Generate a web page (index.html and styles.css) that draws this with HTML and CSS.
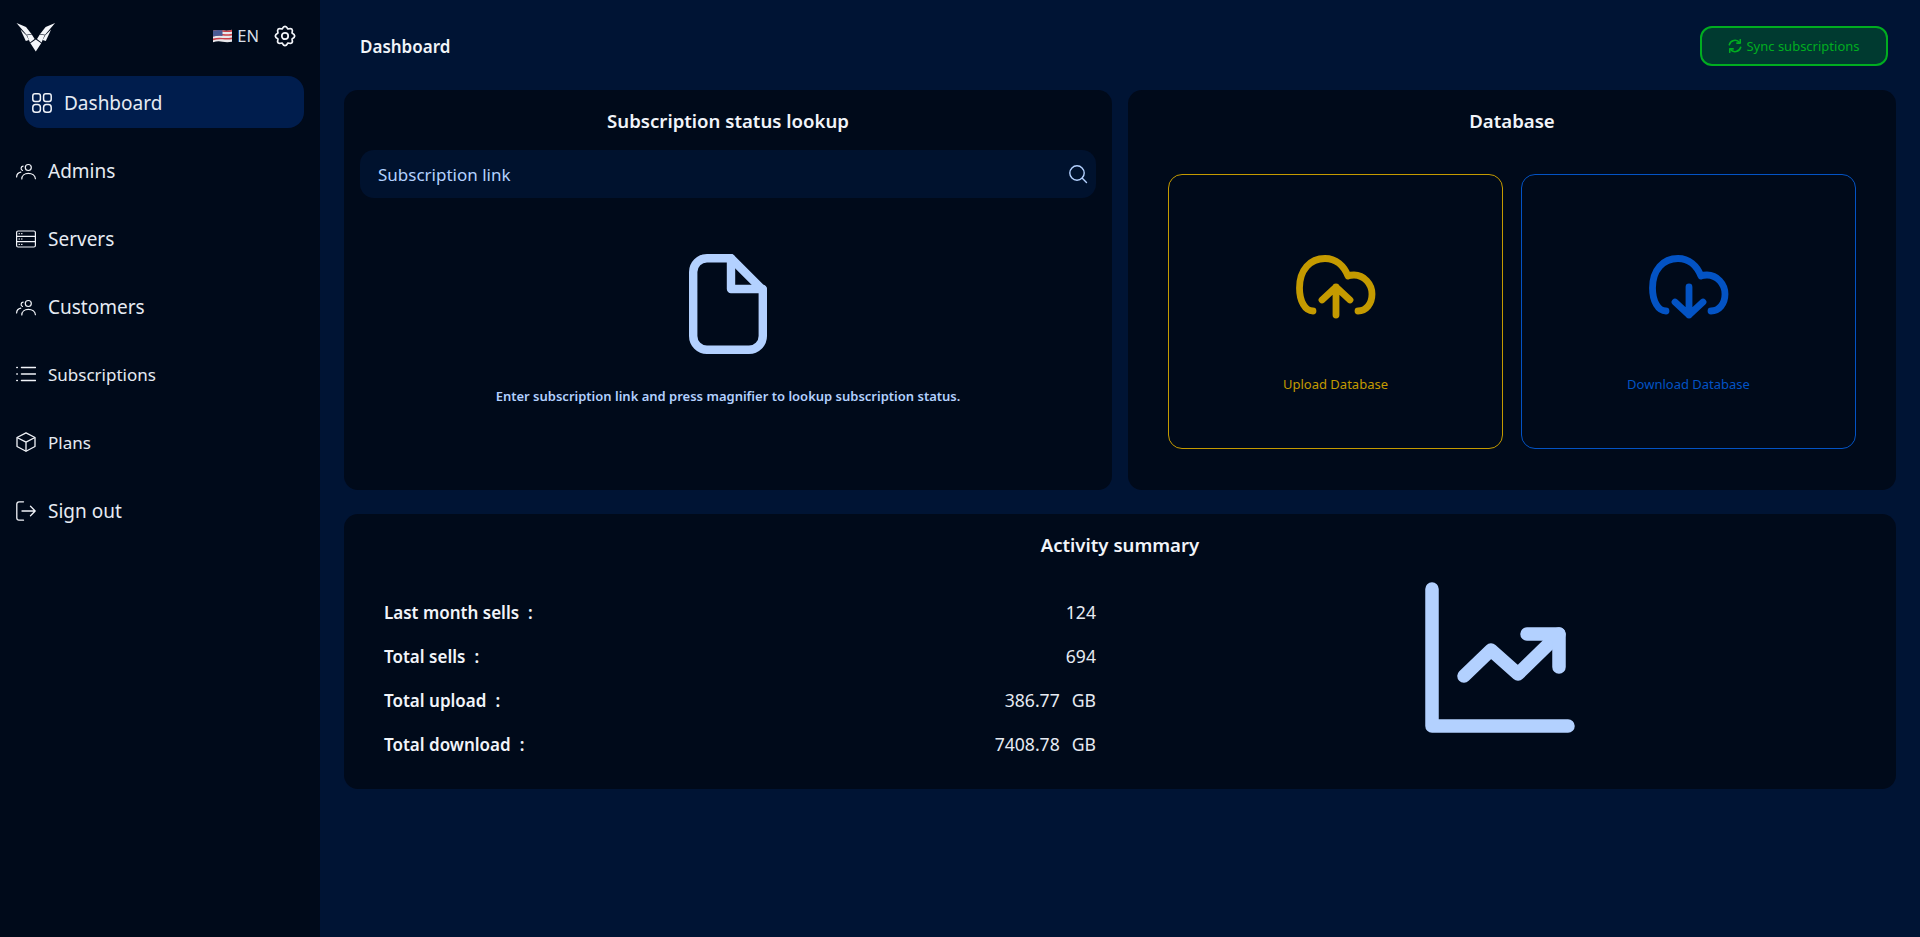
FILE: index.html
```html
<!DOCTYPE html>
<html lang="en">
<head>
<meta charset="utf-8">
<title>Dashboard</title>
<link rel="stylesheet" href="styles.css">
</head>
<body>
<div class="app">
  <aside class="sidebar">
    <div class="side-top">
      <svg class="logo" viewBox="0 0 40 30" fill="#f4f6fa">
        <path d="M0.500 1 L10 5 L15.500 12 L10.500 12.800 Z"/>
        <path d="M4.500 7.500 L10.300 13.300 L13 18 L9.800 19 Z"/>
        <path d="M11 13.300 L15.800 12.600 L18.600 17 L14 20.500 Z"/>
        <path d="M39.100 1 L29.600 5 L24.100 12 L29.100 12.800 Z"/>
        <path d="M35.100 7.500 L29.300 13.300 L26.600 18 L29.800 19 Z"/>
        <path d="M28.600 13.300 L23.800 12.600 L21 17 L25.600 20.500 Z"/>
        <path d="M19.800 17.500 L25.200 21.300 L19.800 29.500 L14.400 21.300 Z"/>
      </svg>
      <div class="side-tools">
        <svg class="flag" viewBox="0 0 20 14">
          <path d="M0 1.500 Q5 0 10 1 T20 .5 V13 Q15 14 10 13 T0 13.500Z" fill="#e8e8ec"/>
          <path d="M0 1.500 Q5 0 10 1 T20 .5 V2.500 Q15 3 10 2.500 T0 3.500Z M0 5.500 Q5 4.500 10 5 T20 4.500 V6.500 Q15 7 10 6.500 T0 7.500Z M0 9.500 Q5 8.500 10 9 T20 8.500 V10.500 Q15 11 10 10.500 T0 11.500Z" fill="#c8404a"/>
          <path d="M0 1.500 Q5 0 10 1 V7 Q5 6.500 0 7.500Z" fill="#4a5a94"/>
        </svg>
        <span class="lang">EN</span>
        <svg class="gear" viewBox="0 0 24 24" fill="none" stroke="#f1f4f9" stroke-width="1.900" stroke-linecap="round" stroke-linejoin="round">
          <path d="M19.670 8.820Q25.500 12 19.670 15.180Q21.550 21.550 15.180 19.670Q12 25.500 8.820 19.670Q2.450 21.550 4.330 15.180Q-1.500 12 4.330 8.820Q2.450 2.450 8.820 4.330Q12 -1.500 15.180 4.330Q21.550 2.450 19.670 8.820Z"/>
          <circle cx="12" cy="12" r="3.500"/>
        </svg>
      </div>
    </div>
    <nav class="nav">
      <a class="nav-item active">
        <svg class="nav-icon" viewBox="0 0 20 20" fill="none" stroke="#f1f4f9" stroke-width="1.500"><rect x=".8" y=".8" width="7.600" height="7.600" rx="2.200"/><rect x="11.600" y=".8" width="7.600" height="7.600" rx="2.200"/><rect x=".8" y="11.600" width="7.600" height="7.600" rx="2.800"/><rect x="11.600" y="11.600" width="7.600" height="7.600" rx="2.800"/></svg>
        <span>Dashboard</span>
      </a>
      <a class="nav-item">
        <svg class="nav-icon" viewBox="0 0 20 20" fill="none" stroke="#f1f4f9" stroke-width="1.200" stroke-linecap="round"><circle cx="12.300" cy="6.500" r="3"/><path d="M5.800 18c0-3.500 2.800-5.600 6.500-5.600s6.900 2 7.100 5.300"/><path d="M6.500 9.500a2.300 2.300 0 0 1 .6-4.400"/><path d="M.6 16c.1-2.700 1.700-4.300 4.200-4.800"/></svg>
        <span>Admins</span>
      </a>
      <a class="nav-item">
        <svg class="nav-icon" viewBox="0 0 20 20" fill="none" stroke="#f1f4f9" stroke-width="1.200"><rect x=".6" y="2" width="18.800" height="16" rx="1.500"/><path d="M.6 7.300H19.400M.6 12.700H19.400"/><path d="M2.500 4.700h1.500M5 4.700h1.500M2.500 10h1.500M5 10h1.500M2.500 15.400h1.500M5 15.400h1.500" stroke-width="1"/></svg>
        <span>Servers</span>
      </a>
      <a class="nav-item">
        <svg class="nav-icon" viewBox="0 0 20 20" fill="none" stroke="#f1f4f9" stroke-width="1.200" stroke-linecap="round"><circle cx="12.300" cy="6.500" r="3"/><path d="M5.800 18c0-3.500 2.800-5.600 6.500-5.600s6.900 2 7.100 5.300"/><path d="M6.500 9.500a2.300 2.300 0 0 1 .6-4.400"/><path d="M.6 16c.1-2.700 1.700-4.300 4.200-4.800"/></svg>
        <span>Customers</span>
      </a>
      <a class="nav-item small">
        <svg class="nav-icon" viewBox="0 0 20 20" fill="none" stroke="#f1f4f9" stroke-width="1.500" stroke-linecap="round"><path d="M5.500 3.500h14M5.500 10h14M5.500 16.500h14"/><path d="M.8 3.500h.5M.8 10h.5M.8 16.500h.5"/></svg>
        <span>Subscriptions</span>
      </a>
      <a class="nav-item small">
        <svg class="nav-icon" viewBox="0 0 20 20" fill="none" stroke="#f1f4f9" stroke-width="1.300" stroke-linejoin="round"><path d="M10 .8l9 4.700v9L10 19.300 1 14.500v-9z"/><path d="M1 5.500l9 4.600 9-4.600M10 10.100v9.200"/></svg>
        <span>Plans</span>
      </a>
      <a class="nav-item">
        <svg class="nav-icon" viewBox="0 0 20 20" fill="none" stroke="#f1f4f9" stroke-width="1.300" stroke-linecap="round" stroke-linejoin="round"><path d="M7.500.8H3A2.300 2.300 0 0 0 .8 3v14A2.300 2.300 0 0 0 3 19.200h4.500"/><path d="M6 10h13.200M14.500 5.300l4.700 4.700-4.700 4.700"/></svg>
        <span>Sign out</span>
      </a>
    </nav>
  </aside>

  <main class="main">
    <header class="topbar">
      <h1 class="page-title">Dashboard</h1>
      <button class="sync-btn">
        <svg class="sync-icon" viewBox="0 0 16 16" fill="none" stroke="#00ad20" stroke-width="1.800" stroke-linecap="round" stroke-linejoin="round"><path d="M1.500 6.500A6.700 6.700 0 0 1 13.300 4.200"/><path d="M14 .8v3.900h-3.900"/><path d="M14.500 9.500A6.700 6.700 0 0 1 2.700 11.800"/><path d="M2 15.200v-3.900h3.900"/></svg>
        <span>Sync subscriptions</span>
      </button>
    </header>

    <div class="top-cards">
      <section class="card lookup">
        <h2 class="card-title">Subscription status lookup</h2>
        <div class="search">
          <span class="search-ph">Subscription link</span>
          <svg class="search-icon" viewBox="0 0 20 20" fill="none" stroke="#b3d1ff" stroke-width="1.400" stroke-linecap="round"><circle cx="9" cy="9" r="7.200"/><path d="M14.300 14.300l4.200 4.200"/></svg>
        </div>
        <div class="lookup-empty">
          <svg class="doc-icon" viewBox="0 0 78 100" fill="none" stroke="#b3d1ff" stroke-width="8.400" stroke-linecap="round" stroke-linejoin="round"><path d="M42 4.200H18A13.800 13.800 0 0 0 4.200 18V82A13.800 13.800 0 0 0 18 95.800H60A13.800 13.800 0 0 0 73.800 82V36Z"/><path d="M42 4.200V35H73.800"/></svg>
          <p class="lookup-text">Enter subscription link and press magnifier to lookup subscription status.</p>
        </div>
      </section>

      <section class="card database">
        <h2 class="card-title">Database</h2>
        <div class="db-boxes">
          <div class="db-box upload">
            <svg class="db-icon" viewBox="0 0 80 64" fill="none" stroke="currentColor" stroke-width="6.800" stroke-linecap="round" stroke-linejoin="round"><path d="M17 56C9 56 3.500 46 3.500 33 3.500 15 14 3.500 29 3.500 40 3.500 48 11 52 21c2-1 4-1 6-1 10 0 18 9 18 19s-6 17-14 17"/><path d="M40 60V32M26 45l14-13 14 13"/></svg>
            <span class="db-label">Upload Database</span>
          </div>
          <div class="db-box download">
            <svg class="db-icon" viewBox="0 0 80 64" fill="none" stroke="currentColor" stroke-width="6.800" stroke-linecap="round" stroke-linejoin="round"><path d="M17 56C9 56 3.500 46 3.500 33 3.500 15 14 3.500 29 3.500 40 3.500 48 11 52 21c2-1 4-1 6-1 10 0 18 9 18 19s-6 17-14 17"/><path d="M40 32V60M26 47l14 13 14-13"/></svg>
            <span class="db-label">Download Database</span>
          </div>
        </div>
      </section>
    </div>

    <section class="card activity">
      <h2 class="card-title">Activity summary</h2>
      <div class="activity-body">
        <dl class="stats">
          <div class="stat"><dt>Last month sells<span class="colon">:</span></dt><dd>124</dd></div>
          <div class="stat"><dt>Total sells<span class="colon">:</span></dt><dd>694</dd></div>
          <div class="stat"><dt>Total upload<span class="colon">:</span></dt><dd>386.77<span class="unit">GB</span></dd></div>
          <div class="stat"><dt>Total download<span class="colon">:</span></dt><dd>7408.78<span class="unit">GB</span></dd></div>
        </dl>
        <div class="chart-wrap">
          <svg class="chart-icon" viewBox="0 0 150 151" fill="none" stroke="#b3d1ff" stroke-width="13.500" stroke-linecap="round" stroke-linejoin="round"><path d="M7 7v137h136"/><path d="M39 94l27-26 27 24 41-40"/><path d="M102 52h32v33"/></svg>
        </div>
      </div>
    </section>
  </main>
</div>
</body>
</html>
```

FILE: styles.css
```css
* { box-sizing: border-box; }
html, body { margin: 0; height: 100%; }
body {
  font-family: "Noto Sans", sans-serif;
  color: #f1f4f9;
  background: #001434;
}
.app { display: flex; height: 937px; overflow: hidden; }

.sidebar { width: 320px; flex: none; background: #000a1a; }
.side-top {
  display: flex;
  justify-content: space-between;
  align-items: flex-start;
  height: 76px;
  padding: 22px 24px 0 16px;
}
.logo { width: 40px; height: 30px; }
.side-tools { display: flex; align-items: center; gap: 5px; padding-top: 3px; }
.flag { width: 19px; height: 14px; }
.lang { font-size: 16.500px; line-height: 20px; color: #d9dee6; }
.gear { width: 22px; height: 22px; margin-left: 10px; }

.nav { display: flex; flex-direction: column; gap: 16px; }
.nav-item {
  display: flex;
  align-items: center;
  gap: 12px;
  height: 52px;
  padding: 2px 0 0 16px;
  font-size: 19px;
  color: #e6ebf3;
}
.nav-item.small { padding-top: 0; font-size: 17px; }
.nav-item.active {
  width: 280px;
  margin-left: 24px;
  padding-left: 8px;
  background: #001d4d;
  border-radius: 16px;
}
.nav-icon { width: 20px; height: 20px; flex: none; }

.main { flex: 1; min-width: 0; padding: 0 24px; }
.topbar {
  display: flex;
  justify-content: space-between;
  align-items: center;
  height: 90px;
  padding: 2px 8px 0 16px;
}
.page-title { margin: 0; font-size: 17px; font-weight: 600; color: #f1f4f9; }
.sync-btn {
  display: flex;
  align-items: center;
  justify-content: center;
  gap: 4px;
  width: 188px;
  height: 40px;
  background: #003a30;
  border: 2px solid #00ad20;
  border-radius: 12px;
  color: #00ad20;
  font: 13px "Noto Sans", sans-serif;
}
.sync-icon { width: 14px; height: 14px; }

.card { background: #000a1a; border-radius: 14px; }
.card-title {
  margin: 0;
  text-align: center;
  font-size: 18.600px;
  line-height: 24px;
  font-weight: 600;
  color: #f1f4f9;
}

.top-cards { display: grid; grid-template-columns: 1fr 1fr; gap: 16px; }
.lookup, .database { min-width: 0; height: 400px; padding-top: 19px; }
.lookup { padding-left: 16px; padding-right: 16px; }
.search {
  display: flex;
  align-items: center;
  justify-content: space-between;
  height: 48px;
  margin-top: 17px;
  padding: 0 8px 0 18px;
  background: #00122e;
  border-radius: 14px;
}
.search-ph { font-size: 17px; color: #b3d1ff; }
.search-icon { width: 20px; height: 20px; }
.lookup-empty { display: flex; flex-direction: column; align-items: center; padding-top: 56px; }
.doc-icon { width: 78px; height: 100px; }
.lookup-text { margin: 32px 0 0; font-size: 13px; line-height: 20px; font-weight: 600; color: #b3d1ff; }

.db-boxes { display: grid; grid-template-columns: 1fr 1fr; gap: 18px; padding: 41px 40px 0; }
.db-box {
  height: 275px;
  display: flex;
  flex-direction: column;
  align-items: center;
  padding-top: 80px;
  border: 1px solid currentColor;
  border-radius: 14px;
}
.upload { color: #c49a00; }
.download { color: #0353c4; }
.db-icon { width: 80px; height: 64px; }
.db-label { margin-top: 55px; font-size: 13px; line-height: 20px; }

.activity { height: 275px; margin-top: 24px; padding-top: 19px; }
.activity-body { display: flex; }
.stats { width: 768px; margin: 33px 0 0; padding: 0 16px 0 40px; }
.stat {
  display: flex;
  justify-content: space-between;
  align-items: center;
  height: 44px;
  font-size: 17px;
}
.stat dt { font-weight: 600; color: #f1f4f9; }
.stat dd { margin: 0; font-size: 17.600px; color: #e6ebf3; }
.colon { margin-left: 9px; }
.unit { margin-left: 12px; }
.chart-wrap { flex: 1; display: flex; justify-content: center; padding: 25px 8px 0 0; }
.chart-icon { width: 150px; height: 151px; }
```
